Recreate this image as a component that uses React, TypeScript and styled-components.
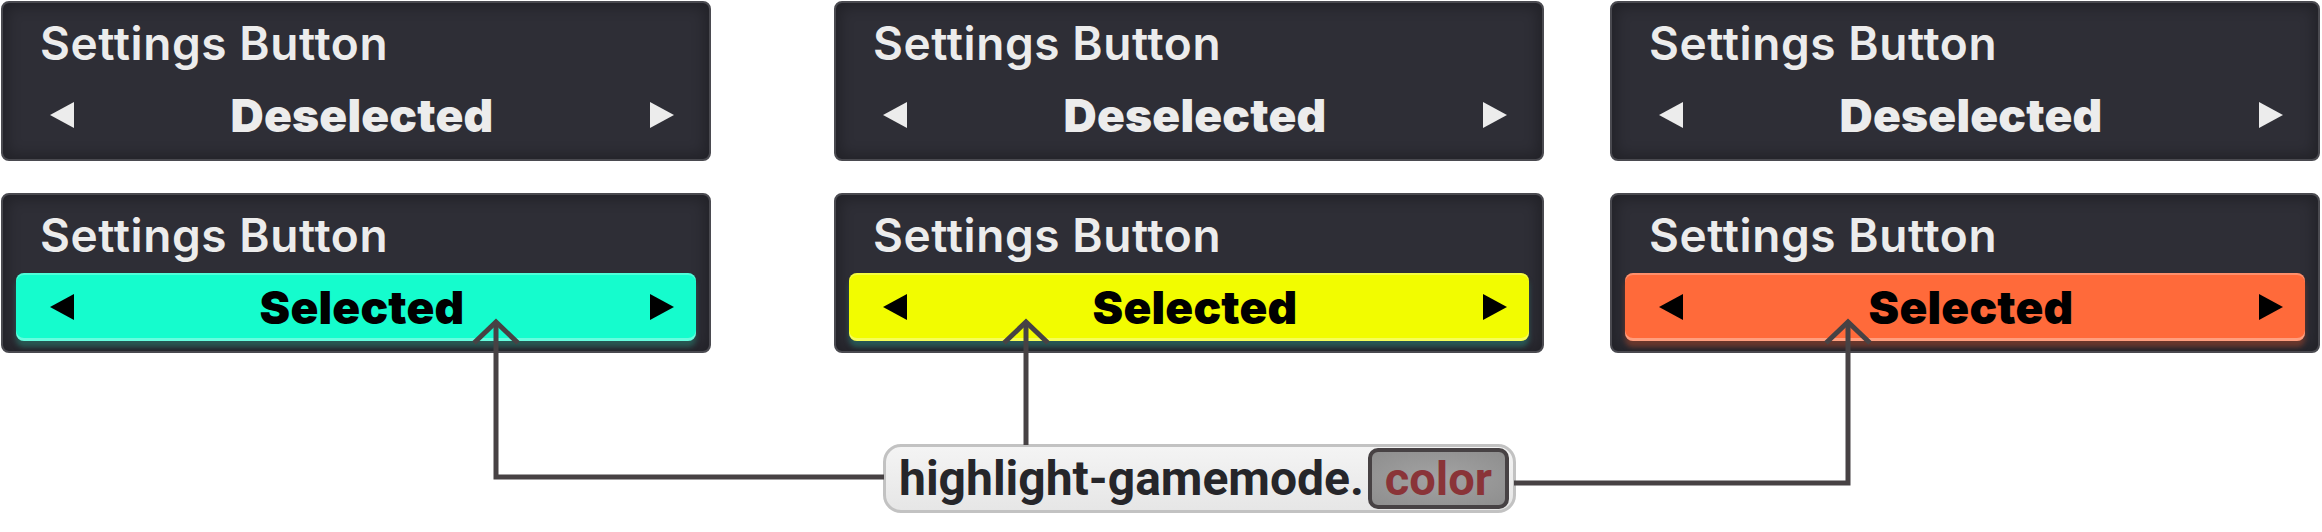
import styled, { createGlobalStyle } from "styled-components";

const GlobalStyle = createGlobalStyle`
  html, body {
    margin: 0;
    padding: 0;
    background: #ffffff;
  }
`;

const Page = styled.div`
  position: relative;
  width: 2322px;
  height: 532px;
  overflow: hidden;
  padding-top: 1px;
  box-sizing: border-box;
  background: #ffffff;
`;

const Columns = styled.div`
  display: flex;
  align-items: flex-start;
`;

const Column = styled.div<{ $offset: number }>`
  display: flex;
  flex-direction: column;
  gap: 32px;
  margin-left: ${(p) => p.$offset}px;
`;

const Card = styled.div`
  width: 710px;
  height: 160px;
  box-sizing: border-box;
  border: 2px solid #4a4a50;
  border-radius: 8px;
  background: #2e2e36;
  box-shadow: inset 0 0 14px 4px rgba(0, 0, 0, 0.28);
  display: flex;
  flex-direction: column;
`;

const Title = styled.div`
  font-family: Inter, Lato, sans-serif;
  font-weight: 600;
  font-size: 46px;
  line-height: 46px;
  letter-spacing: 0.6px;
  color: #ececec;
  padding: 17px 0 0 37px;
  height: 60px;
  box-sizing: border-box;
  margin-bottom: 18px;
`;

const ValueRow = styled.div<{ $bg?: string; $shade?: string }>`
  display: grid;
  grid-template-columns: auto 1fr auto;
  align-items: center;
  height: 68px;
  margin: 0 13px;
  padding: 0 22px 0 34px;
  border-radius: 8px;
  box-sizing: border-box;
  background: ${(p) => p.$bg ?? "transparent"};
  box-shadow: ${(p) =>
    p.$bg
      ? `inset 0 -3px 0 rgba(255,255,255,0.35), inset 0 2px 0 rgba(255,255,255,0.25), 0 6px 5px ${p.$shade}`
      : "none"};
`;

const Value = styled.div<{ $dark?: boolean }>`
  font-family: Inter, Lato, sans-serif;
  font-weight: 900;
  font-size: 46px;
  line-height: 47px;
  letter-spacing: 0.2px;
  text-align: center;
  color: ${(p) => (p.$dark ? "#000000" : "#ececec")};
`;

const Arrow = styled.span<{ $dir: "left" | "right"; $dark?: boolean }>`
  width: 0;
  height: 0;
  border-top: 13.5px solid transparent;
  border-bottom: 13.5px solid transparent;
  ${(p) =>
    p.$dir === "left"
      ? `border-right: 24px solid ${p.$dark ? "#000" : "#ececec"};`
      : `border-left: 24px solid ${p.$dark ? "#000" : "#ececec"};`}
`;

const Annotation = styled.div`
  display: flex;
  margin-top: 91px;
  padding-left: 883px;
`;

const Pill = styled.div`
  display: flex;
  align-items: center;
  height: 69px;
  box-sizing: border-box;
  padding: 0 4px 0 13px;
  border: 3px solid #c2c2c2;
  border-radius: 18px;
  background: linear-gradient(#f4f4f4, #e6e6e6);
`;

const Path = styled.span`
  font-family: Roboto, "Liberation Sans", sans-serif;
  font-weight: 700;
  font-size: 48px;
  color: #26262a;
`;

const Field = styled.span`
  display: flex;
  align-items: center;
  justify-content: center;
  width: 141px;
  height: 61px;
  box-sizing: border-box;
  margin-left: 4px;
  border: 4px solid #474244;
  border-radius: 10px;
  background: radial-gradient(#a3a3a3, #8e8e8e);
  font-family: Roboto, "Liberation Sans", sans-serif;
  font-weight: 700;
  font-size: 47px;
  color: #8a3438;
`;

const Connectors = styled.svg`
  position: absolute;
  left: 0;
  top: 0;
  pointer-events: none;
`;

const modes = [
  { offset: 1, bg: "#15fccd", shade: "rgba(40, 90, 84, 0.95)" },
  { offset: 123, bg: "#f2fc00", shade: "rgba(40, 88, 86, 0.95)" },
  { offset: 66, bg: "#ff6a3a", shade: "rgba(110, 56, 44, 0.95)" },
];

const tips = [496, 1026, 1848];

export default function App() {
  return (
    <Page>
      <GlobalStyle />
      <Columns>
        {modes.map((m, i) => (
          <Column key={i} $offset={m.offset}>
            <Card>
              <Title>Settings Button</Title>
              <ValueRow>
                <Arrow $dir="left" />
                <Value>Deselected</Value>
                <Arrow $dir="right" />
              </ValueRow>
            </Card>
            <Card>
              <Title>Settings Button</Title>
              <ValueRow $bg={m.bg} $shade={m.shade}>
                <Arrow $dir="left" $dark />
                <Value $dark>Selected</Value>
                <Arrow $dir="right" $dark />
              </ValueRow>
            </Card>
          </Column>
        ))}
      </Columns>

      <Annotation>
        <Pill>
          <Path>highlight-gamemode.</Path>
          <Field>color</Field>
        </Pill>
      </Annotation>

      <Connectors width="2322" height="532" viewBox="0 0 2322 532">
        <g
          fill="none"
          stroke="#474244"
          strokeWidth="5"
          strokeLinejoin="miter"
        >
          <path d="M496 323 V477 H884" />
          <path d="M1026 323 V445" />
          <path d="M1514 483 H1848 V323" />
          {tips.map((x) => (
            <path key={x} d={`M${x - 22} 343 L${x} 322 L${x + 22} 343`} />
          ))}
        </g>
      </Connectors>
    </Page>
  );
}
